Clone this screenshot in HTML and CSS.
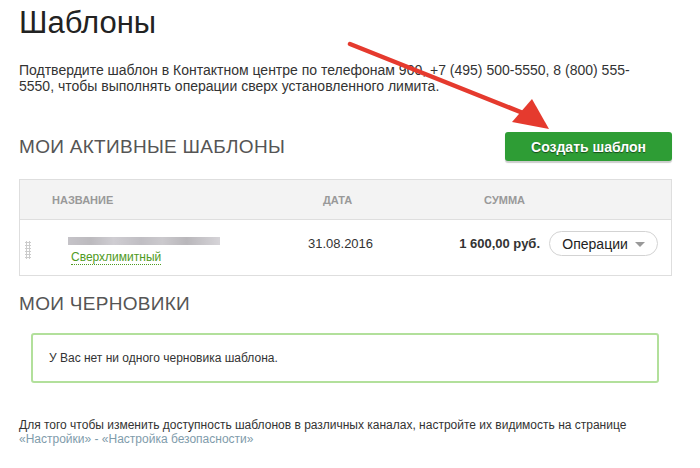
FILE: index.html
```html
<!DOCTYPE html>
<html lang="ru">
<head>
    <meta charset="UTF-8">
    <meta name="viewport" content="width=device-width, initial-scale=1.0">
    <title>Шаблоны</title>
    <link rel="stylesheet" href="styles.css">
</head>
<body>
    <div class="page">
        <h1 class="title">Шаблоны</h1>

        <p class="intro">Подтвердите шаблон в Контактном центре по телефонам 900, +7 (495) 500-5550, 8 (800) 555-5550, чтобы выполнять операции сверх установленного лимита.</p>

        <div class="section-head">
            <h2 class="section-title">Мои активные шаблоны</h2>
            <button class="create-btn">Создать шаблон</button>
        </div>

        <div class="templates">
            <div class="templates-head">
                <span></span>
                <span class="col-name">Название</span>
                <span class="col-date">Дата</span>
                <span class="col-sum">Сумма</span>
                <span></span>
            </div>
            <div class="templates-row">
                <span class="handle"></span>
                <div class="cell-name">
                    <span class="blurred"></span>
                    <a class="status" href="#">Сверхлимитный</a>
                </div>
                <span class="cell-date">31.08.2016</span>
                <span class="cell-sum">1 600,00 руб.</span>
                <div class="cell-ops">
                    <button class="ops-btn">Операции <span class="caret"></span></button>
                </div>
            </div>
        </div>

        <h2 class="section-title drafts-title">Мои черновики</h2>

        <div class="empty-box">У Вас нет ни одного черновика шаблона.</div>

        <p class="footnote">
            Для того чтобы изменить доступность шаблонов в различных каналах, настройте их видимость на странице<br>
            <a class="settings-link" href="#">«Настройки» - «Настройка безопасности»</a>
        </p>

        <!-- annotation arrow drawn over the screenshot -->
        <svg class="arrow" width="700" height="468" viewBox="0 0 700 468">
            <line x1="350" y1="44" x2="528" y2="115" stroke="#e53a2e" stroke-width="4.5" stroke-linecap="round"/>
            <polygon points="512,122 532,99 549,129" fill="#e53a2e"/>
        </svg>
    </div>
</body>
</html>
```

FILE: styles.css
```css
* {
    box-sizing: border-box;
}

body {
    margin: 0;
    font-family: "Liberation Sans", Arial, sans-serif;
    color: #333;
    background: #fff;
}

.page {
    position: relative;
    width: 700px;
    padding: 5px 28px 0 19px;
}

.title {
    margin: 0;
    font-size: 31px;
    line-height: 36px;
    font-weight: normal;
    color: #222;
}

.intro {
    width: 630px;
    margin: 21px 0 0;
    font-size: 14px;
    line-height: 16px;
    color: #333;
}

.section-head {
    display: flex;
    justify-content: space-between;
    align-items: center;
    margin-top: 38px;
}

.section-title {
    margin: 0;
    font-size: 19px;
    line-height: 24px;
    font-weight: normal;
    letter-spacing: 0.3px;
    text-transform: uppercase;
    color: #555;
}

.create-btn {
    width: 167px;
    height: 29px;
    border: none;
    border-radius: 3px;
    background: #2e9d35;
    box-shadow: 0 2px 1px rgba(0, 0, 0, 0.2);
    color: #fff;
    font-family: inherit;
    font-size: 14px;
    font-weight: bold;
    text-shadow: 0 1px 1px rgba(0, 0, 0, 0.5);
    cursor: pointer;
}

.templates {
    margin-top: 18px;
    border: 1px solid #dedede;
}

.templates-head,
.templates-row {
    display: grid;
    grid-template-columns: 32px 256px 90px 142px 1fr;
}

.templates-head {
    height: 40px;
    align-items: center;
    background: #f3f3f3;
    border-bottom: 1px solid #dedede;
    font-size: 11px;
    font-weight: bold;
    text-transform: uppercase;
    color: #999;
}

.col-date {
    padding-left: 15px;
}

.col-sum {
    text-align: right;
    padding-right: 15px;
}

.templates-row {
    height: 55px;
    align-items: start;
    font-size: 13px;
    color: #333;
}

.handle {
    width: 6px;
    height: 18px;
    margin: 21px 0 0 5px;
    background-image: radial-gradient(circle, #ccc 1px, transparent 1.2px);
    background-size: 3px 3px;
}

.cell-name {
    display: flex;
    flex-direction: column;
    align-items: flex-start;
    padding: 17px 0 0 16px;
}

.blurred {
    width: 152px;
    height: 8px;
    background: linear-gradient(90deg, #c5c3c8 0%, #bcbabe 15%, #cfcdd2 30%, #c0bec3 48%, #cbc9cd 62%, #b9b7bb 78%, #d6d4d8 100%);
    filter: blur(0.6px);
}

.status {
    margin: 5px 0 0 3px;
    font-size: 12px;
    line-height: 14px;
    color: #4f9a22;
    text-decoration: none;
    border-bottom: 1px dotted #4f9a22;
}

.cell-date {
    padding-top: 16px;
    line-height: 15px;
}

.cell-sum {
    padding-top: 16px;
    line-height: 15px;
    text-align: right;
    font-weight: bold;
}

.cell-ops {
    padding: 11px 0 0 9px;
}

.ops-btn {
    width: 109px;
    height: 25px;
    border: 1px solid #d3d3d3;
    border-radius: 13px;
    background: #fff;
    font-family: inherit;
    font-size: 14px;
    color: #222;
    cursor: pointer;
}

.caret {
    display: inline-block;
    margin-left: 3px;
    border-top: 5px solid #999;
    border-left: 5px solid transparent;
    border-right: 5px solid transparent;
    vertical-align: middle;
}

.drafts-title {
    margin-top: 16px;
}

.empty-box {
    margin: 17px 13px 0 12px;
    height: 50px;
    padding: 0 16px;
    display: flex;
    align-items: center;
    border: 2px solid #b2e09b;
    border-radius: 3px;
    font-size: 12px;
    color: #333;
}

.footnote {
    margin: 35px 0 0;
    font-size: 12px;
    line-height: 14px;
    color: #333;
}

.settings-link {
    color: #7f9cab;
    text-decoration: none;
    border-bottom: 1px solid #d5dde0;
}

.arrow {
    position: absolute;
    left: 0;
    top: 0;
    pointer-events: none;
}
```
